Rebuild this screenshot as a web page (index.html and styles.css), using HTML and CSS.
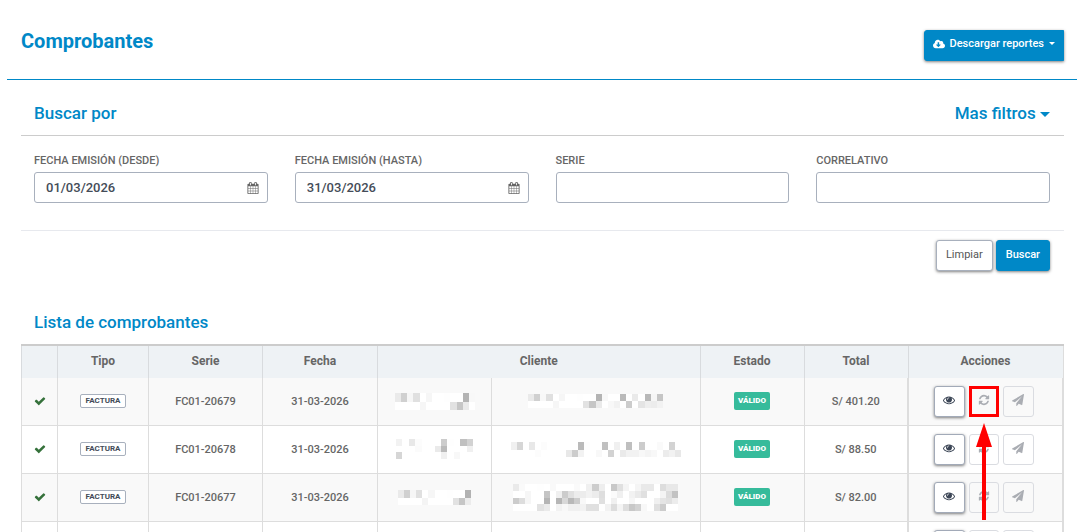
FILE: index.html
```html
<!DOCTYPE html>
<html lang="es">
<head>
    <meta charset="UTF-8">
    <meta name="viewport" content="width=device-width, initial-scale=1">
    <title>Comprobantes</title>
    <link rel="stylesheet" href="styles.css">
</head>
<body>
    <svg class="sprite" aria-hidden="true">
        <symbol id="eye" viewBox="0 0 1792 1792"><path d="M1664 960q-152-236-381-353 61 104 61 225 0 185-131.5 316.5t-316.5 131.5-316.5-131.5-131.5-316.5q0-121 61-225-229 117-381 353 133 205 333.5 326.5t434.5 121.5 434.5-121.5 333.5-326.5zm-720-384q0-20-14-34t-34-14q-125 0-214.5 89.5t-89.5 214.5q0 20 14 34t34 14 34-14 14-34q0-86 61-147t147-61q20 0 34-14t14-34zm848 384q0 34-20 69-140 230-376.5 368.5t-499.5 138.5-499.5-139-376.5-368q-20-35-20-69t20-69q140-229 376.5-368t499.5-139 499.5 139 376.5 368q20 35 20 69z"/></symbol>
        <symbol id="refresh" viewBox="0 0 1792 1792"><path d="M1639 1056q0 5-1 7-64 268-268 434.5t-478 166.5q-146 0-282.5-55t-243.5-157l-129 129q-19 19-45 19t-45-19-19-45v-448q0-26 19-45t45-19h448q26 0 45 19t19 45-19 45l-137 137q71 66 161 102t187 36q134 0 250-65t186-179q11-17 53-117 8-23 30-23h192q13 0 22.5 9.5t9.5 22.5zm25-800v448q0 26-19 45t-45 19h-448q-26 0-45-19t-19-45 19-45l138-138q-148-137-349-137-134 0-250 65t-186 179q-11 17-53 117-8 23-30 23h-199q-13 0-22.5-9.5t-9.5-22.5v-7q65-268 270-434.5t480-166.5q146 0 284 55.5t245 156.5l130-129q19-19 45-19t45 19 19 45z"/></symbol>
        <symbol id="plane" viewBox="0 0 1792 1792"><path d="M1764 11q33 24 27 64l-256 1536q-5 29-32 45-14 8-31 8-11 0-24-5l-453-185-242 295q-18 23-49 23-13 0-22-4-19-7-30.5-23.5t-11.5-36.5v-349l864-1059-1069 925-395-162q-37-14-40-55-2-40 32-59l1664-960q15-9 32-9 20 0 36 11z"/></symbol>
        <symbol id="calendar" viewBox="0 0 1792 1792"><path d="M192 1664h288v-288h-288v288zm352 0h320v-288h-320v288zm-352-352h288v-320h-288v320zm352 0h320v-320h-320v320zm-352-384h288v-288h-288v288zm736 736h320v-288h-320v288zm-384-736h320v-288h-320v288zm768 736h288v-288h-288v288zm-384-352h320v-320h-320v320zm-352-864v-288q0-13-9.5-22.5t-22.5-9.5h-64q-13 0-22.5 9.5t-9.5 22.5v288q0 13 9.5 22.5t22.5 9.5h64q13 0 22.5-9.5t9.5-22.5zm736 864h288v-320h-288v320zm-384-384h320v-288h-320v288zm384 0h288v-288h-288v288zm32-480v-288q0-13-9.5-22.5t-22.5-9.5h-64q-13 0-22.5 9.5t-9.5 22.5v288q0 13 9.5 22.5t22.5 9.5h64q13 0 22.5-9.5t9.5-22.5zm384-64v1280q0 52-38 90t-90 38h-1408q-52 0-90-38t-38-90v-1280q0-52 38-90t90-38h128v-96q0-66 47-113t113-47h64q66 0 113 47t47 113v96h384v-96q0-66 47-113t113-47h64q66 0 113 47t47 113v96h128q52 0 90 38t38 90z"/></symbol>
        <symbol id="check" viewBox="0 0 1792 1792"><path d="M1671 566q0 40-28 68l-724 724-136 136q-28 28-68 28t-68-28l-136-136-362-362q-28-28-28-68t28-68l136-136q28-28 68-28t68 28l294 295 656-657q28-28 68-28t68 28l136 136q28 28 28 68z"/></symbol>
        <symbol id="cloud" viewBox="0 0 640 512"><path d="M537.6 226.6c4.1-10.7 6.4-22.4 6.4-34.6 0-53-43-96-96-96-19.7 0-38.1 6-53.3 16.2C367 64.2 315.3 32 256 32c-88.4 0-160 71.6-160 160 0 2.7.1 5.4.2 8.1C40.2 219.8 0 273.2 0 336c0 79.5 64.5 144 144 144h368c70.7 0 128-57.3 128-128 0-61.9-44-113.6-102.4-125.4zm-132.9 88.7L299.3 420.7c-6.2 6.2-16.4 6.2-22.6 0L171.3 315.3c-10.1-10.1-2.9-27.3 11.3-27.3H248V176c0-8.8 7.2-16 16-16h48c8.8 0 16 7.2 16 16v112h65.4c14.2 0 21.4 17.2 11.3 27.3z"/></symbol>
    </svg>

    <div class="page">
        <header class="page-header">
            <h1>Comprobantes</h1>
            <button type="button" class="btn btn-primary btn-download">
                <svg class="icon-cloud"><use href="#cloud"/></svg>
                Descargar reportes
                <span class="caret caret-small"></span>
            </button>
        </header>

        <main class="content">
            <form class="filters">
                <div class="section-title bordered">
                    <h2>Buscar por</h2>
                    <a href="#" class="more">Mas filtros <span class="caret"></span></a>
                </div>
                <div class="fields">
                    <div class="field">
                        <label for="desde">FECHA EMISIÓN (DESDE)</label>
                        <div class="control">
                            <input type="text" id="desde" value="01/03/2026">
                            <svg class="icon"><use href="#calendar"/></svg>
                        </div>
                    </div>
                    <div class="field">
                        <label for="hasta">FECHA EMISIÓN (HASTA)</label>
                        <div class="control">
                            <input type="text" id="hasta" value="31/03/2026">
                            <svg class="icon"><use href="#calendar"/></svg>
                        </div>
                    </div>
                    <div class="field">
                        <label for="serie">SERIE</label>
                        <div class="control"><input type="text" id="serie"></div>
                    </div>
                    <div class="field">
                        <label for="correlativo">CORRELATIVO</label>
                        <div class="control"><input type="text" id="correlativo"></div>
                    </div>
                </div>
                <div class="form-actions">
                    <button type="reset" class="btn btn-default">Limpiar</button>
                    <button type="button" class="btn btn-primary">Buscar</button>
                </div>
            </form>

            <section class="list">
                <div class="section-title">
                    <h2>Lista de comprobantes</h2>
                </div>
                <table class="vouchers">
                    <colgroup>
                        <col class="col-check">
                        <col class="col-tipo">
                        <col class="col-serie">
                        <col class="col-fecha">
                        <col class="col-serie">
                        <col>
                        <col class="col-estado">
                        <col class="col-estado">
                        <col class="col-acciones">
                    </colgroup>
                    <thead>
                        <tr>
                            <th></th>
                            <th>Tipo</th>
                            <th>Serie</th>
                            <th>Fecha</th>
                            <th colspan="2">Cliente</th>
                            <th>Estado</th>
                            <th>Total</th>
                            <th>Acciones</th>
                        </tr>
                    </thead>
                    <tbody>
                        <tr>
                            <td><svg class="icon check"><use href="#check"/></svg></td>
                            <td><span class="tag">FACTURA</span></td>
                            <td>FC01-20679</td>
                            <td>31-03-2026</td>
                            <td><svg class="mask mask-a" data-mask="doc1"></svg></td>
                            <td><svg class="mask mask-b" data-mask="name1"></svg></td>
                            <td><span class="badge">VÁLIDO</span></td>
                            <td>S/ 401.20</td>
                            <td class="acciones">
                                <div class="actions">
                                    <button type="button" class="action" aria-label="Ver"><svg class="icon"><use href="#eye"/></svg></button>
                                    <div class="marked">
                                        <button type="button" class="action narrow" aria-label="Actualizar" disabled><svg class="icon"><use href="#refresh"/></svg></button>
                                        <div class="highlight"></div>
                                        <svg class="arrow" viewBox="0 0 16 97"><path fill="#f00" d="M8 0l8 24h-6v73H6V24H0z"/></svg>
                                    </div>
                                    <button type="button" class="action" aria-label="Enviar" disabled><svg class="icon"><use href="#plane"/></svg></button>
                                </div>
                            </td>
                        </tr>
                        <tr>
                            <td><svg class="icon check"><use href="#check"/></svg></td>
                            <td><span class="tag">FACTURA</span></td>
                            <td>FC01-20678</td>
                            <td>31-03-2026</td>
                            <td><svg class="mask mask-c" data-mask="doc2"></svg></td>
                            <td><svg class="mask mask-d" data-mask="name2"></svg></td>
                            <td><span class="badge">VÁLIDO</span></td>
                            <td>S/ 88.50</td>
                            <td class="acciones">
                                <div class="actions">
                                    <button type="button" class="action" aria-label="Ver"><svg class="icon"><use href="#eye"/></svg></button>
                                    <button type="button" class="action narrow" aria-label="Actualizar" disabled><svg class="icon"><use href="#refresh"/></svg></button>
                                    <button type="button" class="action" aria-label="Enviar" disabled><svg class="icon"><use href="#plane"/></svg></button>
                                </div>
                            </td>
                        </tr>
                        <tr>
                            <td><svg class="icon check"><use href="#check"/></svg></td>
                            <td><span class="tag">FACTURA</span></td>
                            <td>FC01-20677</td>
                            <td>31-03-2026</td>
                            <td><svg class="mask mask-e" data-mask="doc3"></svg></td>
                            <td><svg class="mask mask-f" data-mask="name3"></svg></td>
                            <td><span class="badge">VÁLIDO</span></td>
                            <td>S/ 82.00</td>
                            <td class="acciones">
                                <div class="actions">
                                    <button type="button" class="action" aria-label="Ver"><svg class="icon"><use href="#eye"/></svg></button>
                                    <button type="button" class="action narrow" aria-label="Actualizar" disabled><svg class="icon"><use href="#refresh"/></svg></button>
                                    <button type="button" class="action" aria-label="Enviar" disabled><svg class="icon"><use href="#plane"/></svg></button>
                                </div>
                            </td>
                        </tr>
                        <tr>
                            <td></td>
                            <td></td>
                            <td></td>
                            <td></td>
                            <td></td>
                            <td></td>
                            <td></td>
                            <td></td>
                            <td class="acciones">
                                <div class="actions">
                                    <button type="button" class="action" aria-label="Ver"><svg class="icon"><use href="#eye"/></svg></button>
                                    <button type="button" class="action narrow" aria-label="Actualizar" disabled><svg class="icon"><use href="#refresh"/></svg></button>
                                    <button type="button" class="action" aria-label="Enviar" disabled><svg class="icon"><use href="#plane"/></svg></button>
                                </div>
                            </td>
                        </tr>
                    </tbody>
                </table>
            </section>
        </main>
    </div>
    <script src="script.js"></script>
</body>
</html>
```
FILE: styles.css
```css
* {
    box-sizing: border-box;
}
body {
    margin: 0;
    background-color: #fff;
    color: #666;
    font-family: Roboto, Arial, sans-serif;
    font-size: 11px;
}
h1, h2 {
    margin: 0;
    color: #0088c7;
}
button, input {
    font-family: inherit;
}
.sprite {
    display: none;
}
.page {
    height: 100vh;
    overflow: hidden;
    padding: 0 8px 0 7px;
}
.page-header {
    display: flex;
    justify-content: space-between;
    align-items: center;
    height: 80px;
    padding: 11px 13px 0 14px;
    border-bottom: 1px solid #0088c7;
}
h1 {
    font-size: 20px;
    font-weight: 700;
    line-height: 24px;
    padding-bottom: 8px;
}
h2, .more {
    font-size: 17px;
    font-weight: 500;
    line-height: 20px;
}
.content {
    padding: 0 13px 0 14px;
}

/* buttons */
.btn {
    height: 31px;
    padding: 0 9px 3px;
    border: 1px solid #0088c7;
    border-radius: 3px;
    font-size: 11px;
    font-weight: 500;
    cursor: pointer;
    box-shadow: 0 1px 3px rgba(0, 0, 0, 0.5);
}
.btn-primary {
    background-color: #0088c7;
    color: #fff;
}
.btn-default {
    background-color: #fff;
    border-color: #a8b0bd;
    color: #555;
    font-weight: 400;
}
.btn-download {
    display: flex;
    align-items: center;
    gap: 5px;
    padding: 0 8px 3px;
    border-radius: 3px 0 0 3px;
}
.icon-cloud {
    width: 12px;
    height: 10px;
    fill: currentColor;
}
.caret {
    display: inline-block;
    border: 5px solid transparent;
    border-top-color: currentColor;
    border-bottom: 0;
    vertical-align: middle;
}
.caret-small {
    border-width: 3px 3px 0;
}

/* filters */
.section-title {
    display: flex;
    justify-content: space-between;
    align-items: center;
    padding: 0 14px 0 13px;
}
.bordered {
    height: 56px;
    padding-top: 10px;
    border-bottom: 1px solid #ccc;
}
.more {
    color: #0088c7;
    text-decoration: none;
}
.fields {
    display: grid;
    grid-template-columns: repeat(4, 1fr);
    gap: 27px;
    height: 95px;
    padding: 18px 14px 0 13px;
    border-bottom: 1px solid #e7e9ee;
}
.field label {
    display: block;
    margin-bottom: 4px;
    font-size: 11px;
    font-weight: 500;
    line-height: 14px;
}
.control {
    display: flex;
    align-items: center;
    height: 31px;
    padding: 0 8px 0 11px;
    border: 1px solid #a8b0bd;
    border-radius: 3px;
}
.control input {
    flex: 1;
    min-width: 0;
    height: 100%;
    padding: 0;
    border: none;
    outline: none;
    background: none;
    color: #444c58;
    font-size: 13px;
    font-weight: 500;
}
.icon {
    display: block;
    width: 12px;
    height: 12px;
    fill: currentColor;
}
.form-actions {
    display: flex;
    justify-content: flex-end;
    gap: 3px;
    padding: 9px 14px 0;
}

/* table */
.list .section-title {
    height: 73px;
    padding-top: 28px;
}
.vouchers {
    width: 100%;
    table-layout: fixed;
    border-collapse: collapse;
    border: 1px solid #ddd;
    border-top: 2px solid #ccc;
}
.col-check {
    width: 36px;
}
.col-tipo {
    width: 91px;
}
.col-serie {
    width: 114px;
}
.col-fecha {
    width: 115px;
}
.col-estado {
    width: 104px;
}
.col-acciones {
    width: 155px;
}
.vouchers th {
    height: 33px;
    padding: 0 0 2px;
    background-color: #eef2f5;
    border-left: 1px solid #d8dbde;
    font-size: 12px;
    font-weight: 700;
}
.vouchers td {
    height: 48px;
    padding: 0;
    border: 1px solid #ddd;
    font-weight: 500;
    text-align: center;
}
.vouchers tbody tr:first-child td {
    height: 47px;
    border-top: none;
}
.vouchers tbody tr:nth-child(odd) {
    background-color: #f9f9f9;
}
.vouchers .acciones {
    border-left-width: 2px;
    border-right-width: 2px;
}
.check {
    margin: 0 auto;
    color: #35713b;
}
.tag, .badge {
    display: inline-block;
    border-radius: 2px;
    vertical-align: middle;
}
.tag {
    padding: 0 5px;
    border: 1px solid #a8b0bd;
    background-color: #fff;
    color: #444c58;
    font-size: 8px;
    font-weight: 700;
    line-height: 12px;
}
.badge {
    padding: 0 4px;
    background-color: #36bb9b;
    color: #fff;
    font-size: 8px;
    font-weight: 900;
    line-height: 18px;
}
.actions {
    display: flex;
    justify-content: center;
    gap: 4px;
    padding-right: 4px;
}
.action {
    display: flex;
    justify-content: center;
    align-items: center;
    width: 31px;
    height: 31px;
    padding: 0 0 2px;
    border: 1px solid #a2aab8;
    border-radius: 3px;
    background-color: #fff;
    color: #3c4656;
    box-shadow: 0 1px 3px rgba(0, 0, 0, 0.5);
}
.action:disabled {
    background-color: transparent;
    border-color: #dadce1;
    color: #aaadb3;
    box-shadow: none;
}
.narrow {
    width: 30px;
}

/* callout over the refresh button */
.marked {
    position: relative;
}
.highlight {
    position: absolute;
    inset: 0;
    border: 3px solid #f00;
}
.arrow {
    position: absolute;
    top: 37px;
    left: 7px;
    width: 16px;
    height: 97px;
}

/* client data is masked */
.mask {
    display: block;
    margin: 0 auto;
}
.mask-a {
    width: 80px;
    height: 17px;
}
.mask-b {
    width: 135px;
    height: 14px;
}
.mask-c {
    width: 77px;
    height: 20px;
}
.mask-d {
    width: 170px;
    height: 15px;
}
.mask-e {
    width: 73px;
    height: 15px;
}
.mask-f {
    width: 165px;
    height: 27px;
}
```
FILE: script.js
```js
// one grey level per cell, ".." leaves the cell empty
const masks = {
    doc1: [
        'ea d0 f6 e0 ff f6 ff ff fe ff ff b4 f8',
        'ff ff ff ff f6 ff ff ff ff e2 c6 ea ff'
    ],
    name1: [
        'ea d0 f8 e0 ff f6 ff ff fe ff ff b4 f8 ff ff ba ff ea ff b8 f6 c6',
        'ff ff ff ff f6 ff ff ff ff e2 c6 ea ff f8 f2 ff cc ff e4 ee ec f2'
    ],
    doc2: [
        'f2 .. e8 fc .. .. .. cc fe .. c0 d2',
        '.. .. .. fb .. .. ea ba .. .. .. f0',
        'd6 .. .. .. .. .. .. f0 .. f8 .. ..'
    ],
    name2: [
        'f0 d6 .. e8 .. fc .. .. .. .. .. ba fd .. .. c0 .. f0 .. bf .. cc .. .. fa .. d3 ..',
        '.. .. .. .. fc .. .. .. .. e8 cc f2 .. .. f8 .. d2 .. ea f2 f2 f8 f4 f8 .. ec f2 e8'
    ],
    doc3: [
        'ea d0 f6 e0 ff f6 ff ff fe ff ff b2',
        'ff ff ff ff f4 ff ff ff ff e2 c6 ec'
    ],
    name3: [
        'ea fa ff ff fe ff f9 ff ff ff fa ff f0 cd ee ff c8 e0 f4 ff f5 e9 e9 ff dd e8 e8',
        'ff ff f6 ff ff c4 ff f0 cc e0 ec ec f2 ec de ff fb f0 ff f2 ea e0 ff ff f4 dc c2',
        'cc dd f6 ff ff b4 ff b6 d8 b8 cc f8 ff ff e0 ff f0 ff ff f6 ff ff ff f0 e4 e0 ec',
        'ff ff ff ff e2 ea ff f2 f8 f0 f0 f2 e0 e0 ff f2 dd f4 de c8 d2 f8 ff e0 cc ff ff'
    ]
};

document.querySelectorAll('.mask').forEach(svg => {
    const rows = masks[svg.dataset.mask].map(row => row.split(' '));
    svg.setAttribute('viewBox', `0 0 ${rows[0].length} ${rows.length}`);
    svg.setAttribute('preserveAspectRatio', 'none');
    svg.setAttribute('shape-rendering', 'crispEdges');
    rows.forEach((row, y) => {
        row.forEach((level, x) => {
            if (level === '..') return;
            const rect = document.createElementNS('http://www.w3.org/2000/svg', 'rect');
            rect.setAttribute('x', x);
            rect.setAttribute('y', y);
            rect.setAttribute('width', 1);
            rect.setAttribute('height', 1);
            rect.setAttribute('fill', '#' + level.repeat(3));
            svg.appendChild(rect);
        });
    });
});
```
